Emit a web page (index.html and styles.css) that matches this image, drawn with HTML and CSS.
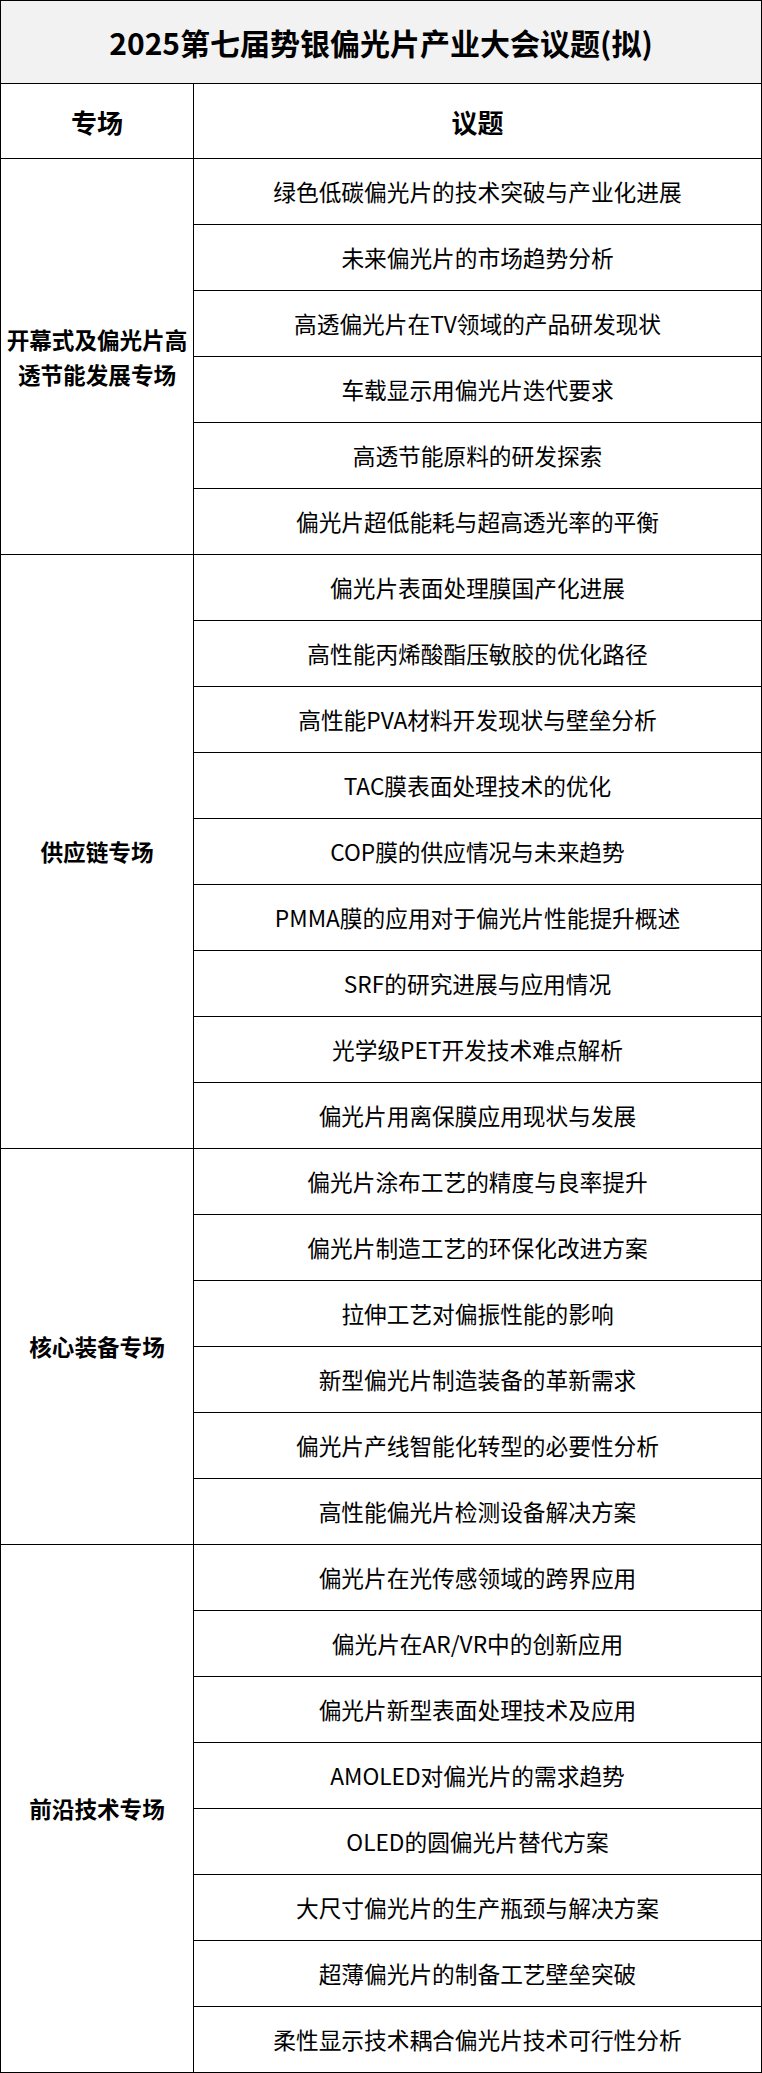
FILE: index.html
```html
<!DOCTYPE html>
<html lang="zh-CN">
<head>
<meta charset="utf-8">
<title>2025第七届势银偏光片产业大会议题(拟)</title>
<link rel="stylesheet" href="styles.css">
</head>
<body>
<div class="agenda">
  <div class="cell title">2025第七届势银偏光片产业大会议题(拟)</div>
  <div class="cell head">专场</div>
  <div class="cell head">议题</div>

  <div class="cell session span6">开幕式及偏光片高透节能发展专场</div>
  <div class="cell topic">绿色低碳偏光片的技术突破与产业化进展</div>
  <div class="cell topic">未来偏光片的市场趋势分析</div>
  <div class="cell topic">高透偏光片在TV领域的产品研发现状</div>
  <div class="cell topic">车载显示用偏光片迭代要求</div>
  <div class="cell topic">高透节能原料的研发探索</div>
  <div class="cell topic">偏光片超低能耗与超高透光率的平衡</div>

  <div class="cell session span9">供应链专场</div>
  <div class="cell topic">偏光片表面处理膜国产化进展</div>
  <div class="cell topic">高性能丙烯酸酯压敏胶的优化路径</div>
  <div class="cell topic">高性能PVA材料开发现状与壁垒分析</div>
  <div class="cell topic">TAC膜表面处理技术的优化</div>
  <div class="cell topic">COP膜的供应情况与未来趋势</div>
  <div class="cell topic">PMMA膜的应用对于偏光片性能提升概述</div>
  <div class="cell topic">SRF的研究进展与应用情况</div>
  <div class="cell topic">光学级PET开发技术难点解析</div>
  <div class="cell topic">偏光片用离保膜应用现状与发展</div>

  <div class="cell session span6">核心装备专场</div>
  <div class="cell topic">偏光片涂布工艺的精度与良率提升</div>
  <div class="cell topic">偏光片制造工艺的环保化改进方案</div>
  <div class="cell topic">拉伸工艺对偏振性能的影响</div>
  <div class="cell topic">新型偏光片制造装备的革新需求</div>
  <div class="cell topic">偏光片产线智能化转型的必要性分析</div>
  <div class="cell topic">高性能偏光片检测设备解决方案</div>

  <div class="cell session span8">前沿技术专场</div>
  <div class="cell topic">偏光片在光传感领域的跨界应用</div>
  <div class="cell topic">偏光片在AR/VR中的创新应用</div>
  <div class="cell topic">偏光片新型表面处理技术及应用</div>
  <div class="cell topic">AMOLED对偏光片的需求趋势</div>
  <div class="cell topic">OLED的圆偏光片替代方案</div>
  <div class="cell topic">大尺寸偏光片的生产瓶颈与解决方案</div>
  <div class="cell topic">超薄偏光片的制备工艺壁垒突破</div>
  <div class="cell topic">柔性显示技术耦合偏光片技术可行性分析</div>
</div>
</body>
</html>
```

FILE: styles.css
```css
html, body {
  margin: 0;
  padding: 0;
  background: #ffffff;
}

body {
  font-family: "Noto Sans CJK SC", "Noto Sans", sans-serif;
  color: #000000;
}

.agenda {
  display: grid;
  grid-template-columns: 193px 568px;
  grid-template-rows: 83px 75px repeat(29, 66px);
  width: 761px;
  border-top: 1px solid #000;
  border-left: 1px solid #000;
}

.cell {
  box-sizing: border-box;
  border-right: 1px solid #000;
  border-bottom: 1px solid #000;
  display: flex;
  align-items: center;
  justify-content: center;
  text-align: center;
}

.title {
  grid-column: 1 / 3;
  background: #f2f2f2;
  font-size: 30px;
  font-weight: 700;
  padding-bottom: 1px;
}

.head {
  font-size: 26px;
  font-weight: 700;
}

.session {
  font-size: 22.6px;
  font-weight: 700;
  line-height: 35px;
  padding: 0 5px;
}

.span6 { grid-row: span 6; }
.span8 { grid-row: span 8; }
.span9 { grid-row: span 9; }

.topic {
  font-size: 22.7px;
  font-weight: 400;
  padding: 0 6px;
}
```
